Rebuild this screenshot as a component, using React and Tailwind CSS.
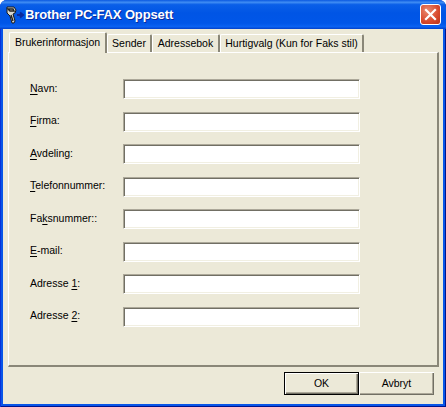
const rows = [
  ["", "N", "avn:"],
  ["", "F", "irma:"],
  ["", "A", "vdeling:"],
  ["", "T", "elefonnummer:"],
  ["Fa", "k", "snummer::"],
  ["", "E", "-mail:"],
  ["Adresse ", "1", ":"],
  ["Adresse ", "2", ":"],
];

function Tab({ children, active, w }) {
  return (
    <div
      className={
        active
          ? "relative z-10 h-[21px] -mb-px flex items-center justify-center rounded-t-[2px] border-t border-l border-white border-r-2 border-r-[#8a8778] bg-[#ece9d8] pb-[1px]"
          : "mt-[2px] h-[18px] flex items-center justify-center rounded-t-[2px] border-t border-l border-white border-r-2 border-r-[#8a8778] bg-[#ece9d8]"
      }
      style={{ width: w }}
    >
      {children}
    </div>
  );
}

function Sunken() {
  return (
    <div className="w-[237px] h-[20px] bg-white border-t border-l border-r border-b border-t-[#aca899] border-l-[#aca899] border-r-white border-b-white shadow-[inset_1px_1px_0_#716f64,inset_-1px_-1px_0_#f1efe2]" />
  );
}

function Btn({ children, def }) {
  return (
    <div
      className={
        def
          ? "w-[75px] h-[23px] flex items-center justify-center border border-black bg-[#ece9d8] shadow-[inset_1px_1px_0_#fff,inset_-1px_-1px_0_#716f64,inset_-2px_-2px_0_#aca899]"
          : "w-[75px] h-[23px] flex items-center justify-center bg-[#ece9d8] shadow-[inset_1px_1px_0_#fff,inset_-1px_-1px_0_#716f64,inset_-2px_-2px_0_#aca899]"
      }
    >
      {children}
    </div>
  );
}

export default function App() {
  return (
    <div className="w-[446px] h-[407px] bg-white overflow-hidden text-[10.5px] text-black font-['Liberation_Sans',sans-serif]">
      <div className="w-full h-full rounded-t-[7px] overflow-hidden flex flex-col bg-[#0855e8] shadow-[inset_1px_0_0_#0831d9,inset_-1px_-1px_0_#00138c]">
        <div className="h-[29px] shrink-0 flex items-center pl-[6px] pr-[5px] bg-[linear-gradient(180deg,#0a58e0_0%,#3f8cf3_8%,#0a5fe8_16%,#0055e5_45%,#0056e8_80%,#0a62f2_92%,#0340c8_100%)]">
          <svg width="19" height="18" viewBox="0 0 19 18" className="shrink-0">
            <path d="M1 1h7l2 3-1 3-2 1 2 7-1 2H6L4 10 1 7z" fill="#d8d8d0" stroke="#1a1a1a" strokeWidth="1" />
            <path d="M2 3h5l1 2H4zM5 9l2 6" stroke="#222" strokeWidth="1.4" fill="none" />
            <path d="M11 9h5M14 6.5l3 2.5-3 2.5" stroke="#0a2a9c" strokeWidth="2" fill="none" />
          </svg>
          <div className="text-[13px] font-bold tracking-[-0.13px] text-white [text-shadow:1px_1px_0_#0a2a9c]">
            Brother PC-FAX Oppsett
          </div>
          <div className="ml-auto w-[21px] h-[21px] rounded-[3px] border border-white bg-[radial-gradient(circle_at_35%_30%,#e98a70,#d8492c_60%,#b8321a)] flex items-center justify-center">
            <svg width="13" height="13" viewBox="0 0 13 13">
              <path d="M2 2l9 9M11 2l-9 9" stroke="#fff" strokeWidth="2.2" strokeLinecap="square" />
            </svg>
          </div>
        </div>
        <div className="flex-1 mx-[3px] mb-[3px] bg-[#ece9d8] flex flex-col pt-[3px] px-[5px]">
          <div className="flex items-start pl-[1px] h-[20px] relative">
            <Tab active w={98}>Brukerinformasjon</Tab>
            <Tab w={45}>Sender</Tab>
            <Tab w={68}>Adressebok</Tab>
            <Tab w={144}>Hurtigvalg (Kun for Faks stil)</Tab>
          </div>
          <div className="w-[431px] h-[315px] border-t border-l border-white border-r-2 border-b-2 border-r-[#8a8778] border-b-[#8a8778] pt-[26px] pl-[21px] flex flex-col gap-[12.5px]">
            {rows.map(([a, u, b], i) => (
              <div key={i} className="flex items-center h-[20px]">
                <div className="w-[93px] leading-[13px] pb-[2px]">
                  {a}<span className="underline underline-offset-2">{u}</span>{b}
                </div>
                <Sunken />
              </div>
            ))}
          </div>
          <div className="flex justify-end pt-[5px] pr-[4px]">
            <Btn def>OK</Btn>
            <Btn>Avbryt</Btn>
          </div>
        </div>
      </div>
    </div>
  );
}
